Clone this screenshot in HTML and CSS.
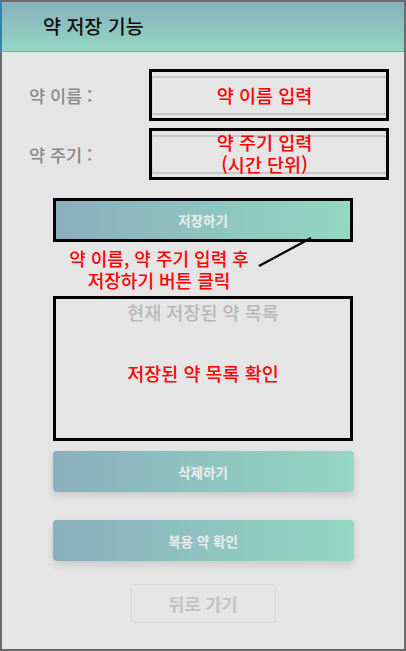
FILE: index.html
```html
<!DOCTYPE html>
<html lang="ko">
<head>
  <meta charset="UTF-8">
  <meta name="viewport" content="width=device-width, initial-scale=1.0">
  <title>약 저장 기능</title>
  <link rel="stylesheet" href="styles.css">
</head>
<body>
  <div class="frame">
    <div class="header">
      <h1>약 저장 기능</h1>
    </div>
    <div class="content">
      <div class="row">
        <span class="label">약 이름 :</span>
        <div class="input-box">
          <div class="edit">
            <span class="note">약 이름 입력</span>
          </div>
        </div>
      </div>
      <div class="row row-second">
        <span class="label">약 주기 :</span>
        <div class="input-box">
          <div class="edit">
            <span class="note note-small">약 주기 입력<br>(시간 단위)</span>
          </div>
        </div>
      </div>

      <div class="save-box">
        <button class="grad-btn save-btn">저장하기</button>
      </div>

      <p class="note annotation">약 이름, 약 주기 입력 후<br>저장하기 버튼 클릭</p>

      <div class="list-box">
        <p class="list-title">현재 저장된 약 목록</p>
        <p class="note list-note">저장된 약 목록 확인</p>
      </div>

      <button class="grad-btn action-btn delete-btn">삭제하기</button>
      <button class="grad-btn action-btn check-btn">복용 약 확인</button>
      <button class="back-btn">뒤로 가기</button>

      <!-- pointer from the annotation to the save button -->
      <svg class="pointer" width="60" height="34" viewBox="0 0 60 34">
        <line x1="55" y1="2" x2="3" y2="30" stroke="#000" stroke-width="2.2"/>
      </svg>
    </div>
  </div>
</body>
</html>
```

FILE: styles.css
```css
* {
  box-sizing: border-box;
}

body {
  margin: 0;
  background-color: #e5e5e5;
  font-family: 'Noto Sans CJK KR', 'Noto Sans', sans-serif;
}

.frame {
  width: 406px;
  height: 651px;
  border-top: 2px solid #6b6b6b;
  border-right: 2px solid #6b6b6b;
  border-bottom: 2px solid #6b6b6b;
  display: flex;
  flex-direction: column;
  overflow: hidden;
}

.header {
  height: 50px;
  flex-shrink: 0;
  background: linear-gradient(180deg, #89afbd, #93d6c3);
  border-left: 2px solid #3581a9;
  border-bottom: 1px solid #9c9c9c;
  display: flex;
  align-items: center;
  padding-left: 41px;
}

h1 {
  margin: 0;
  font-size: 19.5px;
  font-weight: 500;
  color: #111;
  line-height: 1;
  padding-bottom: 1px;
}

.content {
  flex: 1;
  position: relative;
  border-left: 2px solid #6b6b6b;
  display: flex;
  flex-direction: column;
  align-items: center;
  padding-top: 17px;
}

/* input rows */
.row {
  width: 100%;
  display: flex;
  align-items: center;
  padding-left: 27px;
}

.row-second {
  margin-top: 7px;
}

.label {
  width: 120px;
  font-size: 17.5px;
  font-weight: 500;
  color: #8a8a8a;
}

.input-box {
  width: 240px;
  height: 52px;
  border: 3px solid #000;
  padding-top: 4px;
  padding-bottom: 3px;
}

.edit {
  height: 100%;
  border-top: 2px solid #c6c6c6;
  border-bottom: 2px solid #c6c6c6;
  border-left: 1px solid #d6d6d6;
  display: flex;
  align-items: center;
  justify-content: center;
  padding-right: 10px;
}

.note {
  color: #ff0000;
  font-size: 18.5px;
  font-weight: 500;
  text-align: center;
  line-height: 1.2;
}

.note-small {
  line-height: 22px;
  margin-top: -3px;
}

/* save button with frame */
.save-box {
  margin-top: 18px;
  width: 300px;
  height: 44px;
  border: 3px solid #000;
}

.grad-btn {
  border: none;
  background: linear-gradient(90deg, #8aaebe, #93d8c2);
  color: #ececec;
  font-family: inherit;
  font-weight: bold;
  font-size: 13.5px;
  cursor: pointer;
}

.save-btn {
  width: 100%;
  height: 100%;
}

.annotation {
  margin: 5px 0 5px;
  align-self: flex-start;
  margin-left: 51px;
  width: 212px;
  font-size: 18px;
  line-height: 22px;
}

/* list */
.list-box {
  width: 300px;
  height: 145px;
  border: 3px solid #000;
  display: flex;
  flex-direction: column;
  align-items: center;
}

.list-title {
  margin: 0;
  font-size: 18.5px;
  font-weight: 500;
  color: #b7b7b7;
}

.list-note {
  margin: 37px 0 0;
}

/* bottom buttons */
.action-btn {
  width: 301px;
  height: 41px;
  border-radius: 4px;
  box-shadow: 0 4px 8px rgba(0, 0, 0, 0.12);
}

.delete-btn {
  margin-top: 10px;
}

.check-btn {
  margin-top: 28px;
}

.back-btn {
  margin-top: 23px;
  width: 145px;
  height: 39px;
  background: transparent;
  border: 1px solid #d9d9d9;
  border-radius: 3px;
  font-family: inherit;
  font-weight: bold;
  font-size: 17.5px;
  color: #c2c2c2;
  cursor: pointer;
}

.pointer {
  position: absolute;
  left: 254px;
  top: 184px;
}
```
